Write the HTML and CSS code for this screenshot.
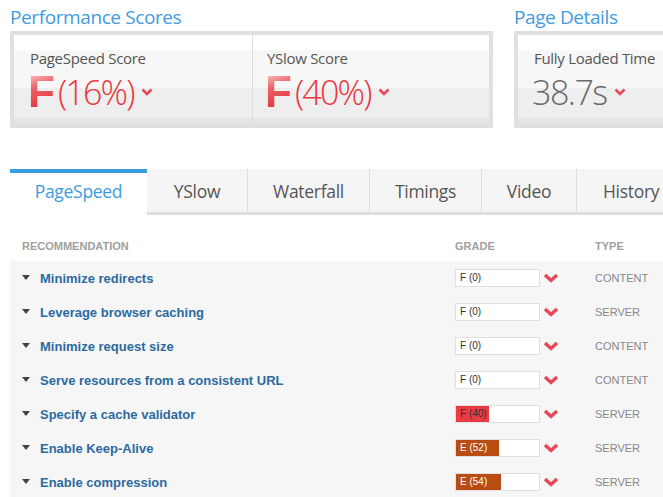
FILE: index.html
```html
<!DOCTYPE html>
<html>
<head>
<meta charset="utf-8">
<link rel="stylesheet" href="styles.css">
</head>
<body>
<div class="page">
  <div class="top">
    <section class="perf">
      <h2 class="sec-title">Performance Scores</h2>
      <div class="card">
        <div class="score">
          <div class="score-label">PageSpeed Score</div>
          <div class="score-value"><span class="grade-letter">F</span><span class="pct">(16%)</span><svg class="chev-sm" viewBox="0 0 12 8"><polyline points="1.5,1.5 6,6 10.5,1.5"/></svg></div>
        </div>
        <div class="score divided">
          <div class="score-label">YSlow Score</div>
          <div class="score-value"><span class="grade-letter">F</span><span class="pct">(40%)</span><svg class="chev-sm" viewBox="0 0 12 8"><polyline points="1.5,1.5 6,6 10.5,1.5"/></svg></div>
        </div>
      </div>
    </section>
    <section class="details">
      <h2 class="sec-title">Page Details</h2>
      <div class="card card-open">
        <div class="score">
          <div class="score-label">Fully Loaded Time</div>
          <div class="score-value"><span class="time">38.7s</span><svg class="chev-sm" viewBox="0 0 12 8"><polyline points="1.5,1.5 6,6 10.5,1.5"/></svg></div>
        </div>
      </div>
    </section>
  </div>

  <nav class="tabs">
    <div class="tab active">PageSpeed</div>
    <div class="tab t-yslow">YSlow</div>
    <div class="tab t-waterfall">Waterfall</div>
    <div class="tab t-timings">Timings</div>
    <div class="tab t-video">Video</div>
    <div class="tab t-history">History</div>
  </nav>

  <div class="table">
    <div class="thead row-grid">
      <div class="th">RECOMMENDATION</div>
      <div class="th">GRADE</div>
      <div></div>
      <div class="th">TYPE</div>
    </div>
    <div class="tbody">
      <div class="row row-grid">
        <div class="name"><span class="tri"></span>Minimize redirects</div>
        <div class="gbox"><span class="gfill">F (0)</span></div>
        <div class="chev-cell"><svg class="chev" viewBox="0 0 16 10"><polyline points="2,2 8,7.5 14,2"/></svg></div>
        <div class="type">CONTENT</div>
      </div>
      <div class="row row-grid">
        <div class="name"><span class="tri"></span>Leverage browser caching</div>
        <div class="gbox"><span class="gfill">F (0)</span></div>
        <div class="chev-cell"><svg class="chev" viewBox="0 0 16 10"><polyline points="2,2 8,7.5 14,2"/></svg></div>
        <div class="type">SERVER</div>
      </div>
      <div class="row row-grid">
        <div class="name"><span class="tri"></span>Minimize request size</div>
        <div class="gbox"><span class="gfill">F (0)</span></div>
        <div class="chev-cell"><svg class="chev" viewBox="0 0 16 10"><polyline points="2,2 8,7.5 14,2"/></svg></div>
        <div class="type">CONTENT</div>
      </div>
      <div class="row row-grid">
        <div class="name"><span class="tri"></span>Serve resources from a consistent URL</div>
        <div class="gbox"><span class="gfill">F (0)</span></div>
        <div class="chev-cell"><svg class="chev" viewBox="0 0 16 10"><polyline points="2,2 8,7.5 14,2"/></svg></div>
        <div class="type">CONTENT</div>
      </div>
      <div class="row row-grid">
        <div class="name"><span class="tri"></span>Specify a cache validator</div>
        <div class="gbox"><span class="gfill fill-f" style="width:40%">F (40)</span></div>
        <div class="chev-cell"><svg class="chev" viewBox="0 0 16 10"><polyline points="2,2 8,7.5 14,2"/></svg></div>
        <div class="type">SERVER</div>
      </div>
      <div class="row row-grid">
        <div class="name"><span class="tri"></span>Enable Keep-Alive</div>
        <div class="gbox"><span class="gfill fill-e" style="width:52%">E (52)</span></div>
        <div class="chev-cell"><svg class="chev" viewBox="0 0 16 10"><polyline points="2,2 8,7.5 14,2"/></svg></div>
        <div class="type">SERVER</div>
      </div>
      <div class="row row-grid">
        <div class="name"><span class="tri"></span>Enable compression</div>
        <div class="gbox"><span class="gfill fill-e" style="width:54%">E (54)</span></div>
        <div class="chev-cell"><svg class="chev" viewBox="0 0 16 10"><polyline points="2,2 8,7.5 14,2"/></svg></div>
        <div class="type">SERVER</div>
      </div>
    </div>
  </div>
</div>
</body>
</html>
```

FILE: styles.css
```css
html, body {
  margin: 0;
  padding: 0;
  background: #fff;
  overflow: hidden;
}
body {
  font-family: "Open Sans", "Noto Sans", sans-serif;
  color: #555;
  width: 663px;
  height: 497px;
}
.page {
  padding-left: 10px;
  width: 653px;
  overflow: hidden;
}
.top {
  display: flex;
  gap: 21px;
  width: 720px;
}
.sec-title {
  margin: 0;
  font-weight: 400;
  font-size: 19px;
  letter-spacing: -0.4px;
  color: #439be0;
  height: 31px;
  line-height: 34px;
}
.perf { width: 483px; flex-shrink: 0; }
.details { width: 200px; flex-shrink: 0; }
.card {
  box-sizing: border-box;
  display: flex;
  border: 4px solid #e0e0e0;
  height: 97px;
  background: linear-gradient(#fff 0, #fff 15px, #f7f7f7 15px, #f7f7f7 53px, #eeeeee 53px, #eeeeee 83px, #e5e5e5 83px);
}
.card-open { border-right: none; }
.score {
  flex: 1;
  padding-left: 16px;
}
.divided { border-left: 1px solid #dcdcdc; padding-left: 14px; }
.score-label {
  padding-top: 13px;
  font-size: 15px;
  letter-spacing: -0.3px;
  color: #555;
  line-height: 20px;
  height: 20px;
}
.score-value {
  display: flex;
  align-items: center;
  margin-top: 8px;
  height: 32px;
}
.grade-letter {
  font-family: "Liberation Sans", Arial, sans-serif;
  font-weight: 700;
  font-size: 44px;
  line-height: 32px;
  margin-left: -2px;
  background: linear-gradient(160deg, #f8b8b8 0%, #ef6066 35%, #de2a34 100%);
  -webkit-background-clip: text;
  background-clip: text;
  color: transparent;
}
.pct {
  font-weight: 300;
  font-size: 34px;
  letter-spacing: -1.8px;
  color: #e8383d;
  margin-left: 3px;
  line-height: 32px;
}
.time {
  font-weight: 300;
  font-size: 34px;
  letter-spacing: -1.5px;
  color: #6a6a6a;
  line-height: 32px;
  margin-left: -2px;
}
.chev-sm {
  width: 12px;
  height: 8px;
  margin-left: 7px;
  fill: none;
  stroke: #e8475a;
  stroke-width: 2.6;
}

.tabs {
  display: flex;
  margin-top: 41px;
  height: 46px;
  width: 720px;
}
.tab {
  box-sizing: border-box;
  flex-shrink: 0;
  height: 46px;
  background: #f5f5f5;
  border-bottom: 3px solid #dedede;
  border-left: 1px solid #dedede;
  font-size: 17.5px;
  letter-spacing: -0.3px;
  color: #555;
  display: flex;
  align-items: center;
  justify-content: center;
}
.tab.active {
  width: 137px;
  background: #fff;
  border: none;
  border-top: 4px solid #3b9ce0;
  color: #3b9ce0;
  padding-bottom: 7px;
}
.t-yslow { width: 100px; border-left: none; }
.t-waterfall { width: 122px; }
.t-timings { width: 112px; }
.t-video { width: 95px; }
.t-history { width: 100px; justify-content: flex-start; padding-left: 26px; }

.row-grid {
  display: grid;
  grid-template-columns: 445px 84px 56px 1fr;
  align-items: center;
}
.thead {
  height: 46px;
  font-family: "Liberation Sans", Arial, sans-serif;
}
.th {
  font-size: 11px;
  font-weight: 700;
  color: #a0a0a0;
  padding-top: 15px;
}
.thead .th:first-child { padding-left: 12px; }
.tbody {
  background: #f6f6f6;
  width: 653px;
}
.row {
  height: 34px;
  font-family: "Liberation Sans", Arial, sans-serif;
}
.name {
  padding-left: 12px;
  font-size: 13px;
  font-weight: 700;
  color: #2c6aa0;
  display: flex;
  align-items: center;
}
.tri {
  width: 0;
  height: 0;
  border-left: 4px solid transparent;
  border-right: 4px solid transparent;
  border-top: 5px solid #444;
  margin-right: 10px;
  margin-top: -1px;
}
.gbox {
  box-sizing: border-box;
  height: 18px;
  width: 85px;
  background: #fff;
  border: 1px solid #e0e0e0;
  display: flex;
}
.gfill {
  font-size: 10px;
  color: #333;
  padding-left: 4px;
  line-height: 16px;
  white-space: nowrap;
  box-sizing: border-box;
}
.fill-f { background: #ee3a43; color: #333; }
.fill-e { background: #b84c12; color: #fff; }
.chev-cell {
  padding-left: 4px;
  display: flex;
  align-items: center;
}
.chev {
  width: 16px;
  height: 10px;
  fill: none;
  stroke: #e8475a;
  stroke-width: 3.4;
}
.type {
  font-size: 11px;
  color: #888;
}
```
